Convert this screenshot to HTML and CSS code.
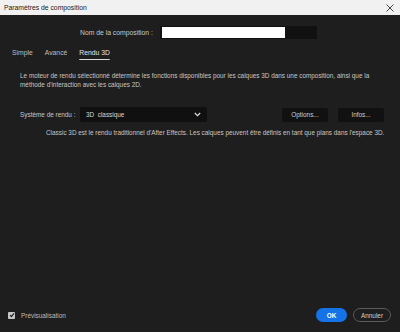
FILE: index.html
```html
<!DOCTYPE html>
<html lang="fr">
<head>
<meta charset="utf-8">
<title>Paramètres de composition</title>
<link rel="stylesheet" href="styles.css">
</head>
<body>
<div class="dialog">
  <div class="titlebar">
    <span class="title">Paramètres de composition</span>
    <svg class="close" width="8" height="8" viewBox="0 0 8 8"><path d="M0.5 0.5 L7.5 7.5 M7.5 0.5 L0.5 7.5" stroke="#333" stroke-width="0.9" fill="none"/></svg>
  </div>
  <div class="main">
    <div class="name-row">
      <span class="label">Nom de la composition :</span>
      <div class="name-field"><div class="name-sel"></div></div>
    </div>
    <div class="tabs">
      <span class="tab">Simple</span>
      <span class="tab">Avancé</span>
      <span class="tab active">Rendu 3D</span>
    </div>
    <p class="desc">Le moteur de rendu sélectionné détermine les fonctions disponibles pour les calques 3D dans une composition, ainsi que la méthode d'interaction avec les calques 2D.</p>
    <div class="render-row">
      <span class="label">Système de rendu :</span>
      <div class="select">
        <span>3D&nbsp; classique</span>
        <svg width="7" height="5" viewBox="0 0 7 5"><path d="M0.8 1 L3.5 3.7 L6.2 1" stroke="#ddd" stroke-width="1.2" fill="none"/></svg>
      </div>
      <div class="btns">
        <span class="btn">Options...</span>
        <span class="btn">Infos...</span>
      </div>
    </div>
    <p class="note">Classic 3D est le rendu traditionnel d'After Effects. Les calques peuvent être définis en tant que plans dans l'espace 3D.</p>
  </div>
  <div class="footer">
    <label class="preview">
      <span class="check"><svg width="6" height="6" viewBox="0 0 6 6"><path d="M1 3.2 L2.4 4.6 L5 1.4" stroke="#1e1e1e" stroke-width="1.2" fill="none"/></svg></span>
      <span>Prévisualisation</span>
    </label>
    <div class="actions">
      <span class="ok">OK</span>
      <span class="cancel">Annuler</span>
    </div>
  </div>
</div>
</body>
</html>
```

FILE: styles.css
```css
* { box-sizing: border-box; }
html, body { margin: 0; padding: 0; }
body {
  width: 400px;
  height: 332px;
  background: #1e1e1e;
  font-family: "Liberation Sans", Arial, sans-serif;
  color: #c6c6c6;
  font-size: 6.4px;
}
.dialog {
  height: 332px;
  display: flex;
  flex-direction: column;
}
.titlebar {
  height: 15px;
  background: #f1f1f1;
  display: flex;
  align-items: center;
  justify-content: space-between;
  padding: 0 6px 0 4px;
  color: #1a1a1a;
  font-family: "Liberation Sans", Arial, sans-serif;
  font-size: 6.8px;
}
.close { display: block; }
.main {
  flex: 1;
}
.name-row {
  display: flex;
  align-items: center;
  margin-top: 11px;
  height: 13px;
  padding-left: 80px;
}
.name-row .label {
  width: 74px;
  font-size: 6.8px;
}
.name-field {
  margin-left: 6px;
  width: 157px;
  height: 13px;
  background: #111;
  padding: 1px 32px 1px 2px;
}
.name-sel {
  height: 100%;
  background: #fff;
}
.tabs {
  display: flex;
  margin-top: 9px;
  padding-left: 12px;
  height: 12px;
  gap: 12px;
}
.tab {
  font-size: 6.8px;
  line-height: 10px;
  color: #bdbdbd;
}
.tab.active {
  color: #e2e2e2;
  border-bottom: 1.5px solid #d8d8d8;
  border-radius: 1px;
  height: 11.5px;
}
.desc {
  margin: 11px 20px 0 20px;
  line-height: 9px;
}
.render-row {
  display: flex;
  align-items: center;
  margin-top: 18px;
  height: 15px;
  padding-left: 20px;
}
.render-row .label {
  width: 60px;
}
.select {
  width: 127px;
  height: 15px;
  background: #101010;
  border-radius: 2px;
  display: flex;
  align-items: center;
  justify-content: space-between;
  padding: 0 6px 0 6px;
  color: #d8d8d8;
}
.select svg { display: block; }
.btns {
  margin-left: auto;
  margin-right: 16px;
  display: flex;
  gap: 10px;
}
.btn {
  width: 46px;
  height: 14px;
  background: #111;
  border-radius: 2px;
  display: flex;
  align-items: center;
  justify-content: center;
  color: #cfcfcf;
}
.note {
  margin: 6px 0 0 46px;
  line-height: 9px;
}
.footer {
  display: flex;
  align-items: center;
  justify-content: space-between;
  padding: 0 9px 10px 8px;
  height: 24px;
}
.preview {
  display: flex;
  align-items: center;
  gap: 6px;
  color: #bdbdbd;
}
.check {
  width: 7px;
  height: 7px;
  background: #c8c8c8;
  border-radius: 1px;
  display: flex;
  align-items: center;
  justify-content: center;
}
.check svg { display: block; }
.actions {
  display: flex;
  gap: 6px;
}
.ok {
  width: 31px;
  height: 14px;
  background: #1473e6;
  color: #fff;
  font-weight: bold;
  border-radius: 7px;
  display: flex;
  align-items: center;
  justify-content: center;
}
.cancel {
  width: 38px;
  height: 14px;
  border: 1px solid #5a5a5a;
  color: #cfcfcf;
  border-radius: 7px;
  display: flex;
  align-items: center;
  justify-content: center;
}
```
